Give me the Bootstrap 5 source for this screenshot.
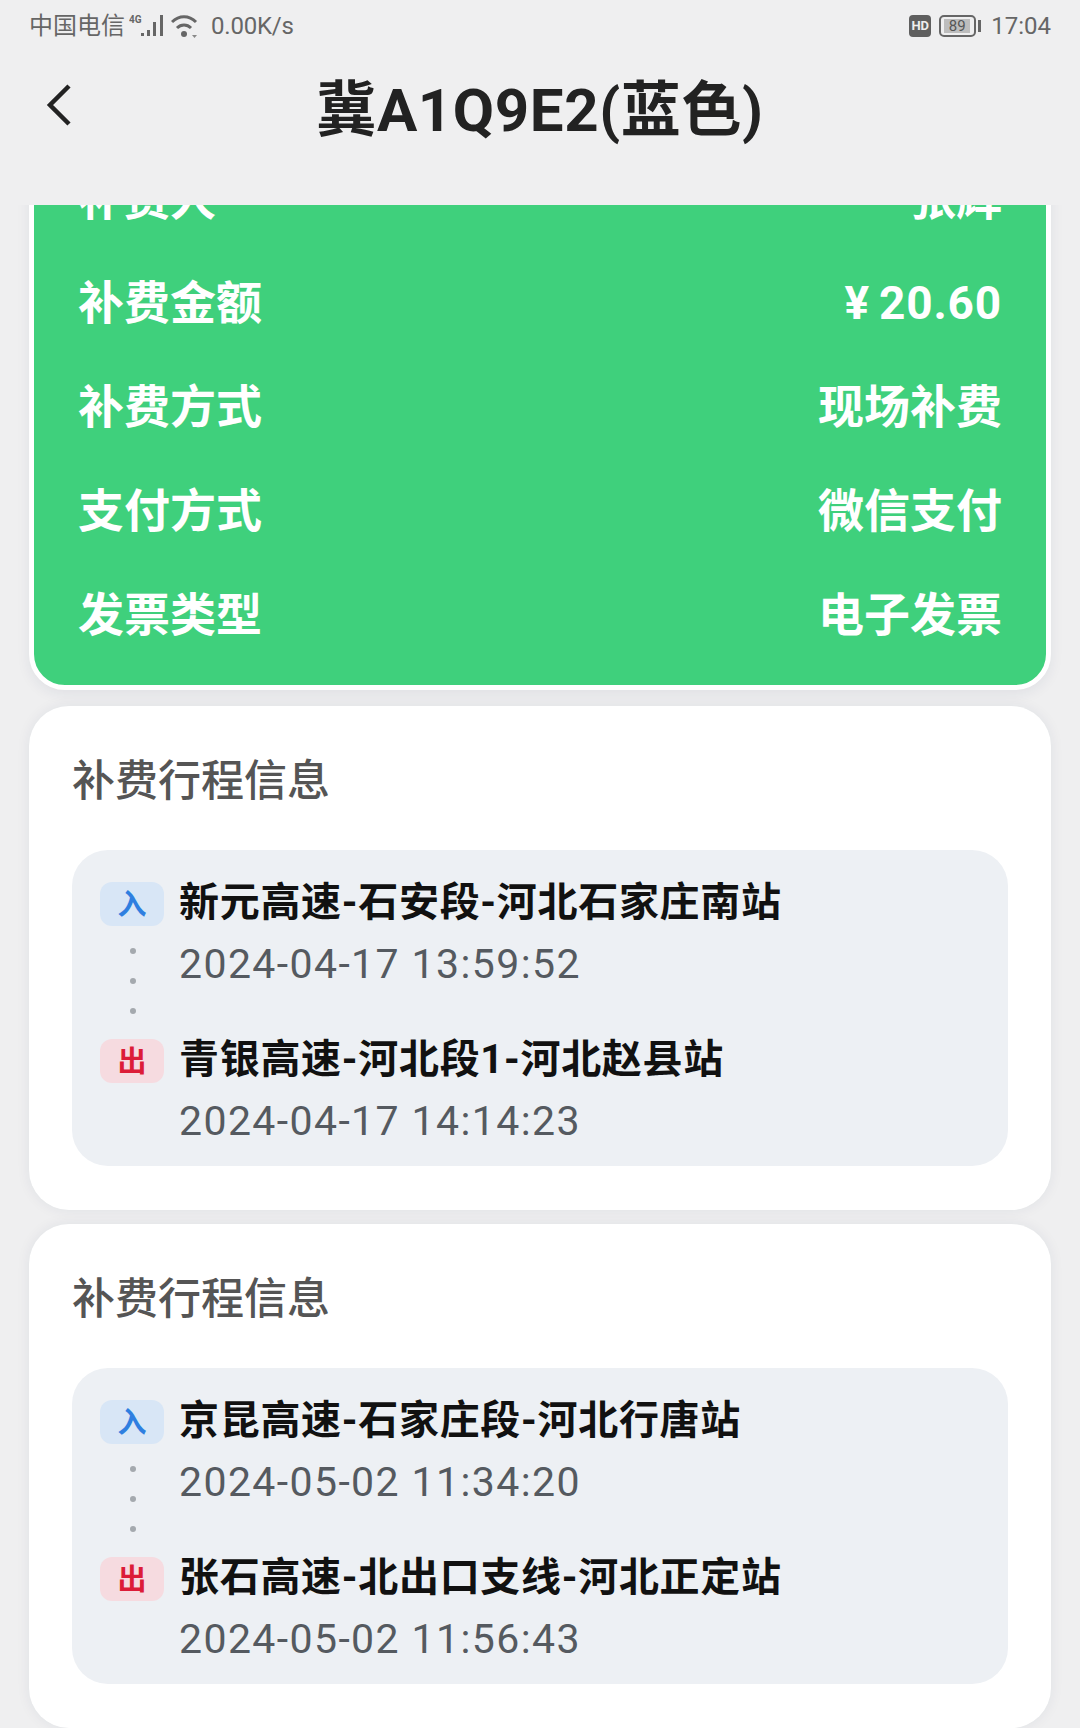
<!DOCTYPE html>
<html lang="zh">
<head>
    <meta charset="UTF-8">
    <meta name="viewport" content="width=device-width, initial-scale=1.0">
    <title>冀A1Q9E2(蓝色)</title>
    <link rel="stylesheet" href="https://cdn.jsdelivr.net/npm/bootstrap@5.3.0/dist/css/bootstrap.min.css">
    <style>
        html, body { height: 100%; }
        body {
            width: 1080px; height: 1728px; overflow: hidden; background: #efeff0;
            font-family: Roboto, "Noto Sans CJK SC", sans-serif;
        }
        .status-bar { height: 50px; padding: 2px 29px 0 29px; color: #666; font-size: 24px; }
        .status-bar .net-text { margin-left: 12px; letter-spacing: -.2px; }
        .hd-tag {
            width: 22px; height: 22px; background: #5f5f5f; color: #eee; border-radius: 4px;
            font-size: 13px; font-weight: 700; line-height: 22px; text-align: center;
        }
        .batt-box {
            width: 37px; height: 22px; border: 2px solid #666; border-radius: 5px; padding: 2px;
            font-size: 15px; line-height: 14px; text-align: center; color: #555;
        }
        .batt-box span { display: block; width: 26px; height: 14px; background: #bdbdbd; margin-left: 1px; }
        .batt-tip { width: 3px; height: 12px; background: #666; margin-left: 2px; margin-right: 10px; }
        .top-bar { height: 155px; padding-bottom: 34px; }
        .top-bar svg { position: absolute; left: 46px; top: 34px; }
        .top-title { font-size: 60px; font-weight: 700; color: #222; line-height: 1; letter-spacing: .6px; }
        .scroll-area { height: 1523px; overflow: hidden; padding: 0 29px; }
        .pay-panel {
            margin-top: -63px; background: #3fd07c; border: 5px solid #fff; border-radius: 0 0 36px 36px;
            padding: 0 44px 18px; color: #fff; font-size: 46px; font-weight: 700;
            box-shadow: 0 4px 14px rgba(30, 40, 80, .07);
        }
        .pay-row { height: 104px; }
        .pay-money { letter-spacing: .8px; word-spacing: -3px; }
        .trip-card {
            background: #fff; border-radius: 40px; padding: 43px 43px 44px; margin-top: 14px;
            box-shadow: 0 0 14px rgba(30, 40, 80, .07);
        }
        .pay-panel + .trip-card { margin-top: 16px; }
        .trip-title { font-size: 43px; line-height: 64px; color: #555; margin-bottom: 37px; font-weight: 500; }
        .trip-box { background: #edf0f4; border-radius: 36px; height: 316px; padding: 23px 28px 0; }
        .stop-row { height: 157px; }
        .stop-tag {
            width: 64px; height: 44px; border-radius: 12px; font-size: 29px; font-weight: 700;
            line-height: 47px; text-align: center; margin-top: 9px; margin-right: 15px; flex: none;
        }
        .tag-in { background: #d8e6f6; color: #2f7fe0; }
        .tag-out { background: #f6dbe0; color: #dc1c38; }
        .stop-name { font-size: 40px; font-weight: 700; color: #111; line-height: 60px; letter-spacing: .7px; }
        .stop-time { font-size: 41px; color: #555a60; line-height: 62px; letter-spacing: 1.4px; }
        .stop-dots { position: absolute; left: 58px; top: 98px; width: 6px; }
        .stop-dots i { display: block; width: 6px; height: 6px; border-radius: 50%; background: #a4a9ae; margin-bottom: 24px; }
    </style>
</head>
<body>
    <!-- status bar -->
    <div class="status-bar d-flex align-items-center justify-content-between">
        <div class="d-flex align-items-center">
            <span>中国电信</span>
            <svg width="38" height="26" viewBox="0 0 38 26" class="ms-1">
                <text x="0" y="10" font-size="10" font-weight="700" fill="#666" font-family="Roboto">4G</text>
                <g fill="#666">
                    <rect x="12" y="20" width="3" height="3"/>
                    <rect x="18" y="17" width="3" height="6"/>
                    <rect x="24" y="9" width="3" height="14"/>
                    <rect x="31" y="2" width="3" height="21"/>
                </g>
            </svg>
            <svg width="28" height="26" viewBox="0 0 28 26" class="ms-1">
                <g fill="none" stroke="#666" stroke-width="3">
                    <path d="M1 9c7-7 17-7 24 0"/>
                    <path d="M6 15c4-4 10-4 14 0"/>
                </g>
                <circle cx="13" cy="21" r="3" fill="#666"/>
                <path d="M21 22h5l-2.500 3z" fill="#888"/>
            </svg>
            <span class="net-text">0.00K/s</span>
        </div>
        <div class="d-flex align-items-center">
            <div class="hd-tag me-2">HD</div>
            <div class="batt-box"><span>89</span></div>
            <div class="batt-tip"></div>
            <span>17:04</span>
        </div>
    </div>

    <!-- title -->
    <div class="top-bar position-relative d-flex align-items-center justify-content-center">
        <svg width="26" height="42" viewBox="0 0 26 42">
            <path d="M23 2L4 21l19 19" fill="none" stroke="#222" stroke-width="4.500"/>
        </svg>
        <div class="top-title">冀A1Q9E2(蓝色)</div>
    </div>

    <div class="scroll-area">
        <div class="pay-panel">
            <div class="pay-row d-flex align-items-center justify-content-between"><span>补费人</span><span>张辉</span></div>
            <div class="pay-row d-flex align-items-center justify-content-between"><span>补费金额</span><span class="pay-money">¥ 20.60</span></div>
            <div class="pay-row d-flex align-items-center justify-content-between"><span>补费方式</span><span>现场补费</span></div>
            <div class="pay-row d-flex align-items-center justify-content-between"><span>支付方式</span><span>微信支付</span></div>
            <div class="pay-row d-flex align-items-center justify-content-between"><span>发票类型</span><span>电子发票</span></div>
        </div>

        <div class="trip-card">
            <div class="trip-title">补费行程信息</div>
            <div class="trip-box position-relative">
                <div class="stop-dots"><i></i><i></i><i></i></div>
                <div class="stop-row d-flex">
                    <div class="stop-tag tag-in">入</div>
                    <div>
                        <div class="stop-name">新元高速-石安段-河北石家庄南站</div>
                        <div class="stop-time">2024-04-17 13:59:52</div>
                    </div>
                </div>
                <div class="stop-row d-flex">
                    <div class="stop-tag tag-out">出</div>
                    <div>
                        <div class="stop-name">青银高速-河北段1-河北赵县站</div>
                        <div class="stop-time">2024-04-17 14:14:23</div>
                    </div>
                </div>
            </div>
        </div>

        <div class="trip-card">
            <div class="trip-title">补费行程信息</div>
            <div class="trip-box position-relative">
                <div class="stop-dots"><i></i><i></i><i></i></div>
                <div class="stop-row d-flex">
                    <div class="stop-tag tag-in">入</div>
                    <div>
                        <div class="stop-name">京昆高速-石家庄段-河北行唐站</div>
                        <div class="stop-time">2024-05-02 11:34:20</div>
                    </div>
                </div>
                <div class="stop-row d-flex">
                    <div class="stop-tag tag-out">出</div>
                    <div>
                        <div class="stop-name">张石高速-北出口支线-河北正定站</div>
                        <div class="stop-time">2024-05-02 11:56:43</div>
                    </div>
                </div>
            </div>
        </div>
    </div>

    <script src="https://cdn.jsdelivr.net/npm/bootstrap@5.3.0/dist/js/bootstrap.bundle.min.js"></script>
</body>
</html>
